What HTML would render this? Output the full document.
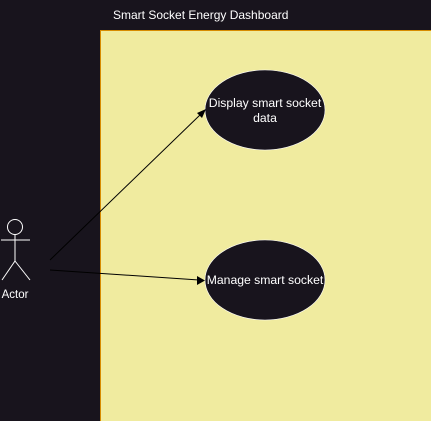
<!DOCTYPE html>
<html><head><style>body{margin:0;background:#18141d;}svg{display:block}</style></head><body>
<svg width="431" height="421" xmlns="http://www.w3.org/2000/svg" font-family="Liberation Sans, sans-serif">
<rect width="431" height="421" fill="#18141d"/>
<text x="113" y="19" fill="#ffffff" font-size="12">Smart Socket Energy Dashboard</text>
<rect x="100.5" y="30.5" width="340" height="400" fill="#f0eb9f" stroke="#d78b00"/>
<ellipse cx="265" cy="110" rx="60" ry="40" fill="#18141d" stroke="#ffffff" stroke-width="0.6"/>
<text x="265" y="107" fill="#fff" font-size="12.2" text-anchor="middle">Display smart socket</text>
<text x="265" y="122" fill="#fff" font-size="12.2" text-anchor="middle">data</text>
<ellipse cx="265" cy="280" rx="60" ry="40" fill="#18141d" stroke="#ffffff" stroke-width="0.6"/>
<text x="265" y="284" fill="#fff" font-size="12.2" text-anchor="middle">Manage smart socket</text>
<g stroke="#fff" fill="none" stroke-width="1">
<circle cx="15" cy="227" r="7.5"/>
<line x1="15" y1="234.5" x2="15" y2="261"/>
<line x1="1" y1="240" x2="30" y2="240"/>
<line x1="15" y1="261" x2="2" y2="280"/>
<line x1="15" y1="261" x2="30" y2="280"/>
</g>
<text x="15" y="298" fill="#fff" font-size="11.5" text-anchor="middle">Actor</text>
<g stroke="#000" stroke-width="1">
<line x1="50" y1="260" x2="201" y2="114"/>
<line x1="50" y1="270" x2="199" y2="280"/>
</g>
<polygon points="206,109 197,113 202,118" fill="#000"/>
<polygon points="205,280.5 197,276 197,285" fill="#000"/>
</svg>
</body></html>
